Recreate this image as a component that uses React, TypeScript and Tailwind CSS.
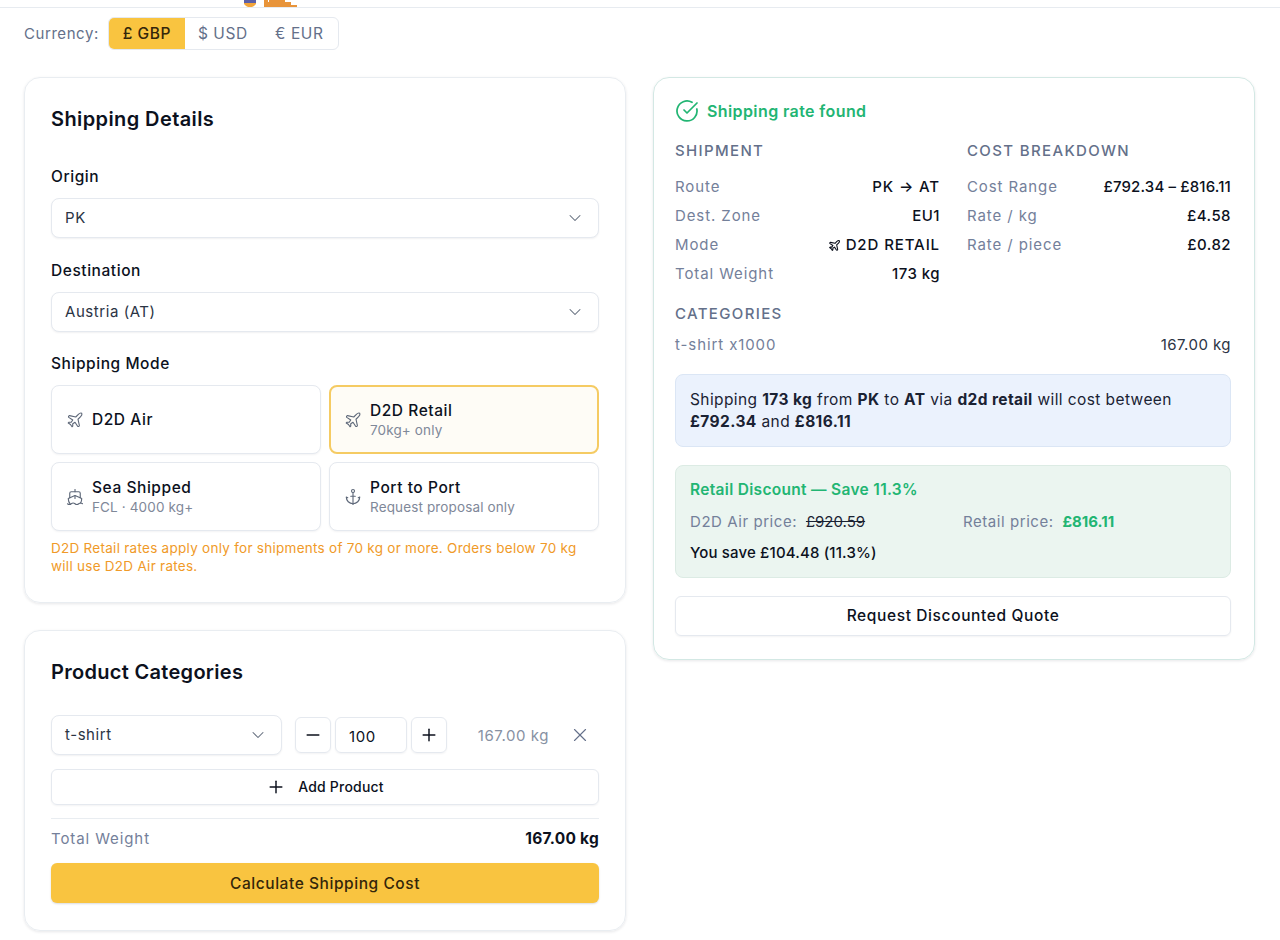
import { Anchor, ChevronDown, CircleCheckBig, Minus, Plane, Plus, Ship, X } from "lucide-react";
import type { ReactNode } from "react";

function Select({ value, className }: { value: string; className?: string }) {
    return (
        <div className={`flex h-10 items-center justify-between rounded-lg border border-[#e5e9ef] bg-white pl-[13px] pr-[13px] shadow-[0_1px_2px_rgba(15,23,42,0.06)] ${className ?? ""}`}>
            <span className="text-[15px] text-[#2b3444]">{value}</span>
            <ChevronDown className="size-5 text-[#5d6778]" strokeWidth={1.25} />
        </div>
    );
}

function ModeCard({ icon, title, sub, active }: { icon: ReactNode; title: string; sub?: string; active?: boolean }) {
    return (
        <div className={`flex h-[69px] items-center gap-2 rounded-lg ${active ? "border-2 border-[#f5cb63] bg-[#fefcf6] px-[13px]" : "border border-[#e5e9ef] bg-white px-[14px] shadow-[0_1px_2px_rgba(15,23,42,0.05)]"}`}>
            <span className="text-[#5d6778]">{icon}</span>
            <div className="flex flex-col">
                <span className="text-[15.5px] font-[450] leading-[22px] text-[#0c111d]">{title}</span>
                {sub ? <span className="text-[13.5px] leading-[17px] tracking-[0.01em] text-[#7f8899]">{sub}</span> : null}
            </div>
        </div>
    );
}

function Row({ label, children }: { label: string; children: ReactNode }) {
    return (
        <div className="flex h-[29px] items-center justify-between text-[15px]">
            <span className="tracking-[0.06em] text-[#74809a]">{label}</span>
            <span className="flex items-center gap-[5px] font-[450] tracking-[0.03em] text-[#0c111d]">{children}</span>
        </div>
    );
}

function Heading({ children }: { children: ReactNode }) {
    return <p className="text-[15px] font-[450] leading-6 tracking-[0.09em] text-[#64708a]">{children}</p>;
}

export default function App() {
    return (
        <div className="min-h-[940px] bg-white font-['Inter',sans-serif] tracking-[0.035em] text-[#0c111d]">
            <header className="h-2 border-b border-[#e7ebf0] pl-[243px]">
                <svg width="56" height="7" viewBox="0 0 56 7" className="block">
                    <rect x="1" y="0" width="12" height="3" fill="#5b5fa8" />
                    <path d="M1 3h12v1l-2 2-2 1H5L3 6 1 4z" fill="#f2a43a" />
                    <path d="M21 0h4v2h1V0h16v2h6v3h6v2H21v-2z" fill="#e8943a" />
                </svg>
            </header>

            <div className="flex items-center gap-[9px] pl-6 pt-[9px]">
                <span className="pt-px text-[15px] text-[#64708a]">Currency:</span>
                <div className="flex h-[33px] items-stretch overflow-hidden rounded-md border border-[#e5e9ef] text-[15.5px]">
                    <span className="flex w-[76px] items-center justify-center bg-[#f9c440] pt-px font-[450] text-[#33260a]">£ GBP</span>
                    <span className="flex w-[76px] items-center justify-center pt-px text-[#64708a]">$ USD</span>
                    <span className="flex w-[77px] items-center justify-center pt-px text-[#64708a]">€ EUR</span>
                </div>
            </div>

            <main className="grid grid-cols-2 items-start gap-[27px] pb-2 pl-6 pr-[25px] pt-[27px]">
                <div className="flex flex-col gap-[27px]">
                    <section className="rounded-2xl border border-[#e9edf1] px-[26px] pb-[27px] pt-[27px] shadow-[0_1px_3px_rgba(15,23,42,0.1)]">
                        <h2 className="text-xl font-semibold leading-7 tracking-[0.02em]">Shipping Details</h2>
                        <p className="mt-[32px] text-[15.5px] font-[450] leading-6">Origin</p>
                        <Select value="PK" className="mt-[9px]" />
                        <p className="mt-[21px] text-[15.5px] font-[450] leading-6">Destination</p>
                        <Select value="Austria (AT)" className="mt-[9px]" />
                        <p className="mt-5 text-[15.5px] font-[450] leading-6">Shipping Mode</p>
                        <div className="mt-[9px] grid grid-cols-2 gap-2">
                            <ModeCard icon={<Plane className="size-[18px]" strokeWidth={1.5} />} title="D2D Air" />
                            <ModeCard active icon={<Plane className="size-[18px]" strokeWidth={1.5} />} title="D2D Retail" sub="70kg+ only" />
                            <ModeCard icon={<Ship className="size-[18px]" strokeWidth={1.5} />} title="Sea Shipped" sub="FCL · 4000 kg+" />
                            <ModeCard icon={<Anchor className="size-[18px]" strokeWidth={1.5} />} title="Port to Port" sub="Request proposal only" />
                        </div>
                        <p className="mt-2 text-[13.5px] leading-[18px] tracking-[0.02em] text-[#f09a28]">
                            D2D Retail rates apply only for shipments of 70 kg or more. Orders below 70 kg will use D2D Air rates.
                        </p>
                    </section>

                    <section className="rounded-2xl border border-[#e9edf1] px-[26px] pb-[27px] pt-[27px] shadow-[0_1px_3px_rgba(15,23,42,0.1)]">
                        <h2 className="text-xl font-semibold leading-7 tracking-[0.015em]">Product Categories</h2>
                        <div className="mt-[29px] flex items-center">
                            <Select value="t-shirt" className="w-[231px] [&>span]:pt-px" />
                            <button className="ml-[13px] flex size-9 items-center justify-center rounded-md border border-[#e5e9ef] shadow-[0_1px_2px_rgba(15,23,42,0.05)]">
                                <Minus className="size-5" strokeWidth={1.75} />
                            </button>
                            <div className="ml-1 flex h-9 w-[72px] items-center rounded-md border border-[#e5e9ef] pl-[13px] pt-[4px] text-[15px] shadow-[0_1px_2px_rgba(15,23,42,0.05)]">100</div>
                            <button className="ml-1 flex size-9 items-center justify-center rounded-md border border-[#e5e9ef] shadow-[0_1px_2px_rgba(15,23,42,0.05)]">
                                <Plus className="size-5" strokeWidth={1.75} />
                            </button>
                            <span className="ml-auto mr-[20px] pt-[2px] text-[15px] text-[#8791a3]">167.00 kg</span>
                            <X className="mr-2 size-[22px] text-[#64708a]" strokeWidth={1.25} />
                        </div>
                        <button className="mt-[14px] flex h-9 w-full items-center justify-center gap-3 rounded-md border border-[#e5e9ef] pb-0.5 text-[14px] font-[450] tracking-[0.015em] shadow-[0_1px_2px_rgba(15,23,42,0.05)]">
                            <Plus className="mt-0.5 size-5" strokeWidth={1.75} />
                            Add Product
                        </button>
                        <div className="mt-[13px] flex items-center justify-between border-t border-[#e9edf1] pt-2">
                            <span className="text-[15px] leading-6 tracking-[0.06em] text-[#74809a]">Total Weight</span>
                            <span className="text-[15.5px] font-bold leading-6 tracking-[0.015em]">167.00 kg</span>
                        </div>
                        <button className="mt-[12px] flex h-10 w-full items-center justify-center rounded-md bg-[#f9c440] pt-px text-[15.5px] font-[450] text-[#33260a] shadow-[0_1px_2px_rgba(15,23,42,0.15)]">
                            Calculate Shipping Cost
                        </button>
                    </section>
                </div>

                <section className="rounded-2xl border border-[#d3e8e4] pb-[23px] pl-[21px] pr-[23px] pt-[21px] shadow-[0_1px_3px_rgba(15,23,42,0.1)]">
                    <div className="flex h-6 items-center gap-2">
                        <CircleCheckBig className="size-6 text-[#22b573]" strokeWidth={1.75} />
                        <span className="pb-px text-[16px] font-semibold tracking-[0.025em] text-[#22b573]">Shipping rate found</span>
                    </div>

                    <div className="mt-[16px] grid grid-cols-[265px_264px] gap-x-[27px]">
                        <div>
                            <Heading>SHIPMENT</Heading>
                            <div className="mt-[10px]">
                                <Row label="Route">
                                    <span className="tracking-[0.06em]">PK → AT</span>
                                </Row>
                                <Row label="Dest. Zone">EU1</Row>
                                <Row label="Mode">
                                    <Plane className="size-[13px]" />
                                    <span className="tracking-[0.06em]">D2D RETAIL</span>
                                </Row>
                                <Row label="Total Weight">173 kg</Row>
                            </div>
                        </div>
                        <div>
                            <Heading>COST BREAKDOWN</Heading>
                            <div className="mt-[10px]">
                                <Row label="Cost Range">
                                    <span className="tracking-[0.01em]">£792.34 – £816.11</span>
                                </Row>
                                <Row label="Rate / kg">£4.58</Row>
                                <Row label="Rate / piece">£0.82</Row>
                            </div>
                        </div>
                    </div>

                    <div className="mt-[13px]">
                        <Heading>CATEGORIES</Heading>
                        <div className="mt-[5px]">
                            <Row label="t-shirt x1000">
                                <span className="font-normal text-[#2b3444]">167.00 kg</span>
                            </Row>
                        </div>
                    </div>

                    <div className="mt-[14px] h-[73px] rounded-lg border border-[#dbe6f5] bg-[#ebf2fd] px-[14px] pt-[14px] text-[15.5px] leading-[22px] tracking-[0.026em] text-[#1a2233]">
                        Shipping <b className="font-bold">173 kg</b> from <b className="font-bold">PK</b> to <b className="font-bold">AT</b> via <b className="font-bold">d2d retail</b> will cost between <b className="font-bold">£792.34</b> and <b className="font-bold">£816.11</b>
                    </div>

                    <div className="mt-[18px] h-[113px] rounded-lg border border-[#dcebe4] bg-[#ebf5f0] px-[14px] pt-[12px]">
                        <p className="text-[15.5px] font-semibold leading-6 tracking-[0.02em] text-[#22b573]">Retail Discount — Save 11.3%</p>
                        <div className="mt-2 grid grid-cols-[273px_1fr] text-[15px] leading-6">
                            <p className="text-[#74809a]">
                                D2D Air price: <span className="ml-1 tracking-[0] text-[#1a2233] line-through">£920.59</span>
                            </p>
                            <p className="text-[#74809a]">
                                Retail price: <span className="ml-1 font-bold tracking-[0] text-[#22b573]">£816.11</span>
                            </p>
                        </div>
                        <p className="mt-[7px] text-[15px] font-[450] leading-6 tracking-[0.01em]">You save £104.48 (11.3%)</p>
                    </div>

                    <button className="mt-[18px] flex h-10 w-full items-center justify-center rounded-md border border-[#e5e9ef] text-[15.5px] font-[450] tracking-[0.04em] shadow-[0_1px_2px_rgba(15,23,42,0.05)]">
                        Request Discounted Quote
                    </button>
                </section>
            </main>
        </div>
    );
}
